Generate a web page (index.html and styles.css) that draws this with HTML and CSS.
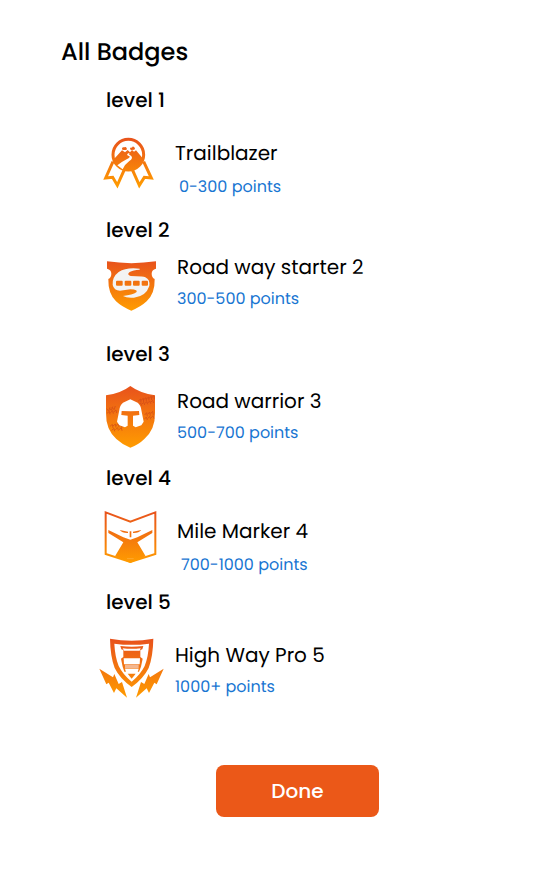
FILE: index.html
```html
<!DOCTYPE html>
<html lang="en">
<head>
<meta charset="utf-8">
<meta name="viewport" content="width=device-width, initial-scale=1">
<title>All Badges</title>
<link rel="stylesheet" href="styles.css">
</head>
<body>
<main class="page">
  <h1 class="title">All Badges</h1>
  <div class="levels">
    <section class="level level-tall">
      <h2 class="level-name">level 1</h2>
      <div class="badge badge-low">
        <svg class="icon" viewBox="9 28 192 192" aria-hidden="true">
          <defs><linearGradient id="g1" gradientUnits="userSpaceOnUse" x1="0" y1="24" x2="0" y2="172"><stop offset="0" stop-color="#e8521c"/><stop offset="1" stop-color="#ff9c00"/></linearGradient></defs>
          <path d="M51 96L29 145L50 143L64 167L84 122M143 96L166 145L145 143L130 167L110 122" fill="none" stroke="url(#g1)" stroke-width="9"/>
          <circle cx="97" cy="75" r="46" fill="#fff" stroke="url(#g1)" stroke-width="9"/>
          <path d="M52 90L78 62L87 68L95 61L102 68L108 61L114 66L120 62L142 88Q136 113 106 121L79 118Q62 111 52 90Z" fill="url(#g1)"/>
          <path d="M78 58Q77 51 85 53Q90 50 92 56Q95 60 90 61L83 61Q78 61 78 58ZM102 58Q102 53 108 54Q110 47 115 53Q119 57 115 60L105 61Z" fill="url(#g1)"/>
          <path d="M97 71Q89 76 99 79Q106 82 92 89Q78 96 64 107L80 119Q87 103 100 94Q113 85 105 78Q96 75 101 71Z" fill="#fff"/>
        </svg>
        <div class="copy">
          <h3 class="name">Trailblazer</h3>
          <p class="points points-inset">0-300 points</p>
        </div>
      </div>
    </section>

    <section class="level">
      <h2 class="level-name">level 2</h2>
      <div class="badge badge-high badge-wide">
        <svg class="icon" viewBox="9 22 192 192" aria-hidden="true">
          <defs><linearGradient id="g2" gradientUnits="userSpaceOnUse" x1="0" y1="28" x2="0" y2="176"><stop offset="0" stop-color="#e8521c"/><stop offset="1" stop-color="#ff9c00"/></linearGradient></defs>
          <path d="M33 29Q106 40 180 29L180 51Q167 54 167 66Q167 78 176 82Q177 126 152 149Q134 166 106 177Q78 166 60 149Q36 126 37 82Q46 78 46 66Q46 54 33 51Z" fill="url(#g2)"/>
          <path d="M131 51Q91 46 68 61Q48 76 50 100Q54 117 72 117L103 113Q128 114 121 122Q110 130 81 133Q92 140 114 138Q150 134 160 103Q163 84 148 77Q140 74 121 74L104 73Q91 69 101 61Q111 55 131 54Z" fill="#f3f3f3"/>
          <rect x="60" y="87" width="20" height="15" rx="3" fill="url(#g2)"/>
          <rect x="86" y="87" width="20" height="15" rx="3" fill="url(#g2)"/>
          <rect x="111" y="87" width="20" height="15" rx="3" fill="url(#g2)"/>
          <rect x="137" y="87" width="19" height="15" rx="3" fill="url(#g2)"/>
        </svg>
        <div class="copy">
          <h3 class="name">Road way starter 2</h3>
          <p class="points">300-500 points</p>
        </div>
      </div>
    </section>

    <section class="level">
      <h2 class="level-name">level 3</h2>
      <div class="badge badge-mid badge-wide">
        <svg class="icon" viewBox="9 21 192 192" aria-hidden="true">
          <defs><linearGradient id="g3" gradientUnits="userSpaceOnUse" x1="0" y1="18" x2="0" y2="203"><stop offset="0" stop-color="#e8521c"/><stop offset="1" stop-color="#ff9c00"/></linearGradient></defs>
          <path d="M103 18Q133 40 177 46L177 99Q178 148 145 177Q128 194 103 203Q79 194 61 177Q29 148 30 99L30 46Q75 40 103 18Z" fill="url(#g3)"/>
          <g fill="none" stroke="#cf4818" stroke-width="3" opacity=".65">
            <path d="M126 64l8-7 1 11M134 62l8-7 1 11M142 60l8-7 1 11M150 58l8-7 1 11M158 56l8-7 1 11M166 54l8-7 1 11M128 75l6-6 3 8M137 73l6-6 3 8M146 71l6-6 3 8M155 69l6-6 3 8M164 67l6-6 3 8"/>
            <path d="M32 86l6 7 4-11M40 84l6 7 4-11M48 82l6 7 4-11M33 100l7-6 2 9M43 98l7-6 2 9M53 96l7-6 2 9"/>
            <path d="M146 105l6-7 2 11M155 103l6-7 2 11M164 101l6-7 2 11M145 118l6-7 3 9M155 116l6-7 3 9M165 114l6-7 3 9"/>
            <path d="M42 139l7-6 2 11M51 138l7-6 2 11M60 137l7-6 2 11M69 138l7-6 2 11M47 151l7-6 2 9M58 149l7-6 2 9M69 149l7-6 2 9"/>
          </g>
          <path d="M103 58L125 68Q135 76 136 90L143 125L136 136L119 142L111 137L111 107L130 105L129 93L103 94L77 93L76 105L95 107L95 137L87 142L70 136L63 125L70 90Q71 76 81 68Z" fill="#fff"/>
        </svg>
        <div class="copy">
          <h3 class="name">Road warrior 3</h3>
          <p class="points">500-700 points</p>
        </div>
      </div>
    </section>

    <section class="level">
      <h2 class="level-name">level 4</h2>
      <div class="badge badge-low badge-wide">
        <svg class="icon" viewBox="9 39 192 192" aria-hidden="true">
          <defs><linearGradient id="g4" gradientUnits="userSpaceOnUse" x1="0" y1="22" x2="0" y2="176"><stop offset="0" stop-color="#e8521c"/><stop offset="1" stop-color="#ff9c00"/></linearGradient></defs>
          <path d="M29 25L103 53L178 25L178 150L103 174L29 150Z" fill="none" stroke="url(#g4)" stroke-width="6"/>
          <path d="M37 78L82 100L103 107L124 100L169 78L169 87L124 115L149 157L103 177L57 157L82 115L37 87Z" fill="url(#g4)"/>
          <path d="M71 78L96 83L96 87Q79 88 71 78ZM136 78L111 83L111 87Q128 88 136 78ZM101 82L106 82L106 100L101 100Z" fill="url(#g4)"/>
          <path d="M93 164h20" stroke="#ffb243" stroke-width="2"/>
        </svg>
        <div class="copy">
          <h3 class="name">Mile Marker 4</h3>
          <p class="points points-inset">700-1000 points</p>
        </div>
      </div>
    </section>

    <section class="level">
      <h2 class="level-name">level 5</h2>
      <div class="badge badge-low">
        <svg class="icon" viewBox="9 26 192 192" aria-hidden="true">
          <defs><linearGradient id="g5" gradientUnits="userSpaceOnUse" x1="0" y1="20" x2="0" y2="198"><stop offset="0" stop-color="#e8521c"/><stop offset="1" stop-color="#ff9c00"/></linearGradient></defs>
          <path fill-rule="evenodd" d="M42 19Q107 31 172 19Q171 72 158 107Q143 138 107 164Q71 138 56 107Q43 72 42 19ZM55 34Q57 73 68 101Q81 127 107 148Q133 127 146 101Q157 73 159 34Q107 41 55 34Z" fill="url(#g5)"/>
          <path d="M73 41Q107 45 142 41L139 51L133 53L133 74L140 79L135 103L129 118L85 118L80 103L75 79L82 74L82 53L76 51Z" fill="url(#g5)"/>
          <path d="M80 48Q107 51 134 48L131 55L84 55ZM74 60L80 62L79 73L76 73ZM141 60L135 62L136 73L139 73ZM83 78L132 78L131 96L84 96Z" fill="#fff"/>
          <rect x="87" y="97" width="41" height="11" fill="#f4b78f"/>
          <path d="M87 109L128 109L124 123L91 123Z" fill="#fff"/>
          <path d="M95 124L119 124L107 139Z" fill="url(#g5)"/>
          <path d="M10 109L51 135L55 125L68 155L78 149L93 196L61 168L54 182L38 151L31 156ZM203 109L162 135L158 125L145 155L135 149L120 196L152 168L159 182L175 151L182 156Z" fill="url(#g5)"/>
        </svg>
        <div class="copy">
          <h3 class="name">High Way Pro 5</h3>
          <p class="points">1000+ points</p>
        </div>
      </div>
    </section>
  </div>
  <button class="done" type="button">Done</button>
</main>
</body>
</html>
```
FILE: styles.css
```css
* {
  box-sizing: border-box;
}

body {
  margin: 0;
  background: #fff;
  color: #000;
  font-family: Poppins, Inter, "Liberation Sans", sans-serif;
  text-rendering: geometricPrecision;
}

h1,
h2,
h3,
p {
  margin: 0;
}

.page {
  display: flex;
  flex-direction: column;
  padding: 35px 16px 64px 61px;
}

.title {
  font-size: 24px;
  line-height: 36px;
  font-weight: 500;
}

.levels {
  margin-top: 14px;
  padding-left: 38px;
}

.level {
  min-height: 124px;
}

.level-tall {
  min-height: 130px;
}

.level-name {
  padding-left: 7px;
  font-size: 20px;
  line-height: 30px;
  font-weight: 500;
}

.badge {
  display: flex;
  align-items: flex-start;
  gap: 12px;
}

.badge-wide {
  gap: 14px;
}

.badge-low {
  padding-top: 24px;
}

.badge-mid {
  padding-top: 18px;
}

.badge-high {
  padding-top: 8px;
  align-items: flex-end;
}

.icon {
  flex: none;
  width: 64px;
  height: 64px;
  overflow: visible;
}

.badge-high .icon {
  margin-bottom: -12px;
}

.name {
  font-size: 20px;
  line-height: 28px;
  font-weight: 400;
}

.points {
  margin-top: 6px;
  font-size: 16px;
  line-height: 24px;
  color: #1976d2;
}

.points-inset {
  margin-top: 8px;
  padding-left: 4px;
}

.done {
  align-self: center;
  width: 30%;
  min-width: 163px;
  margin-top: 54px;
  padding: 11px 16px;
  border: 0;
  border-radius: 8px;
  background: #eb5818;
  color: #fff;
  font-family: inherit;
  font-size: 20px;
  line-height: 30px;
  font-weight: 500;
}
```
